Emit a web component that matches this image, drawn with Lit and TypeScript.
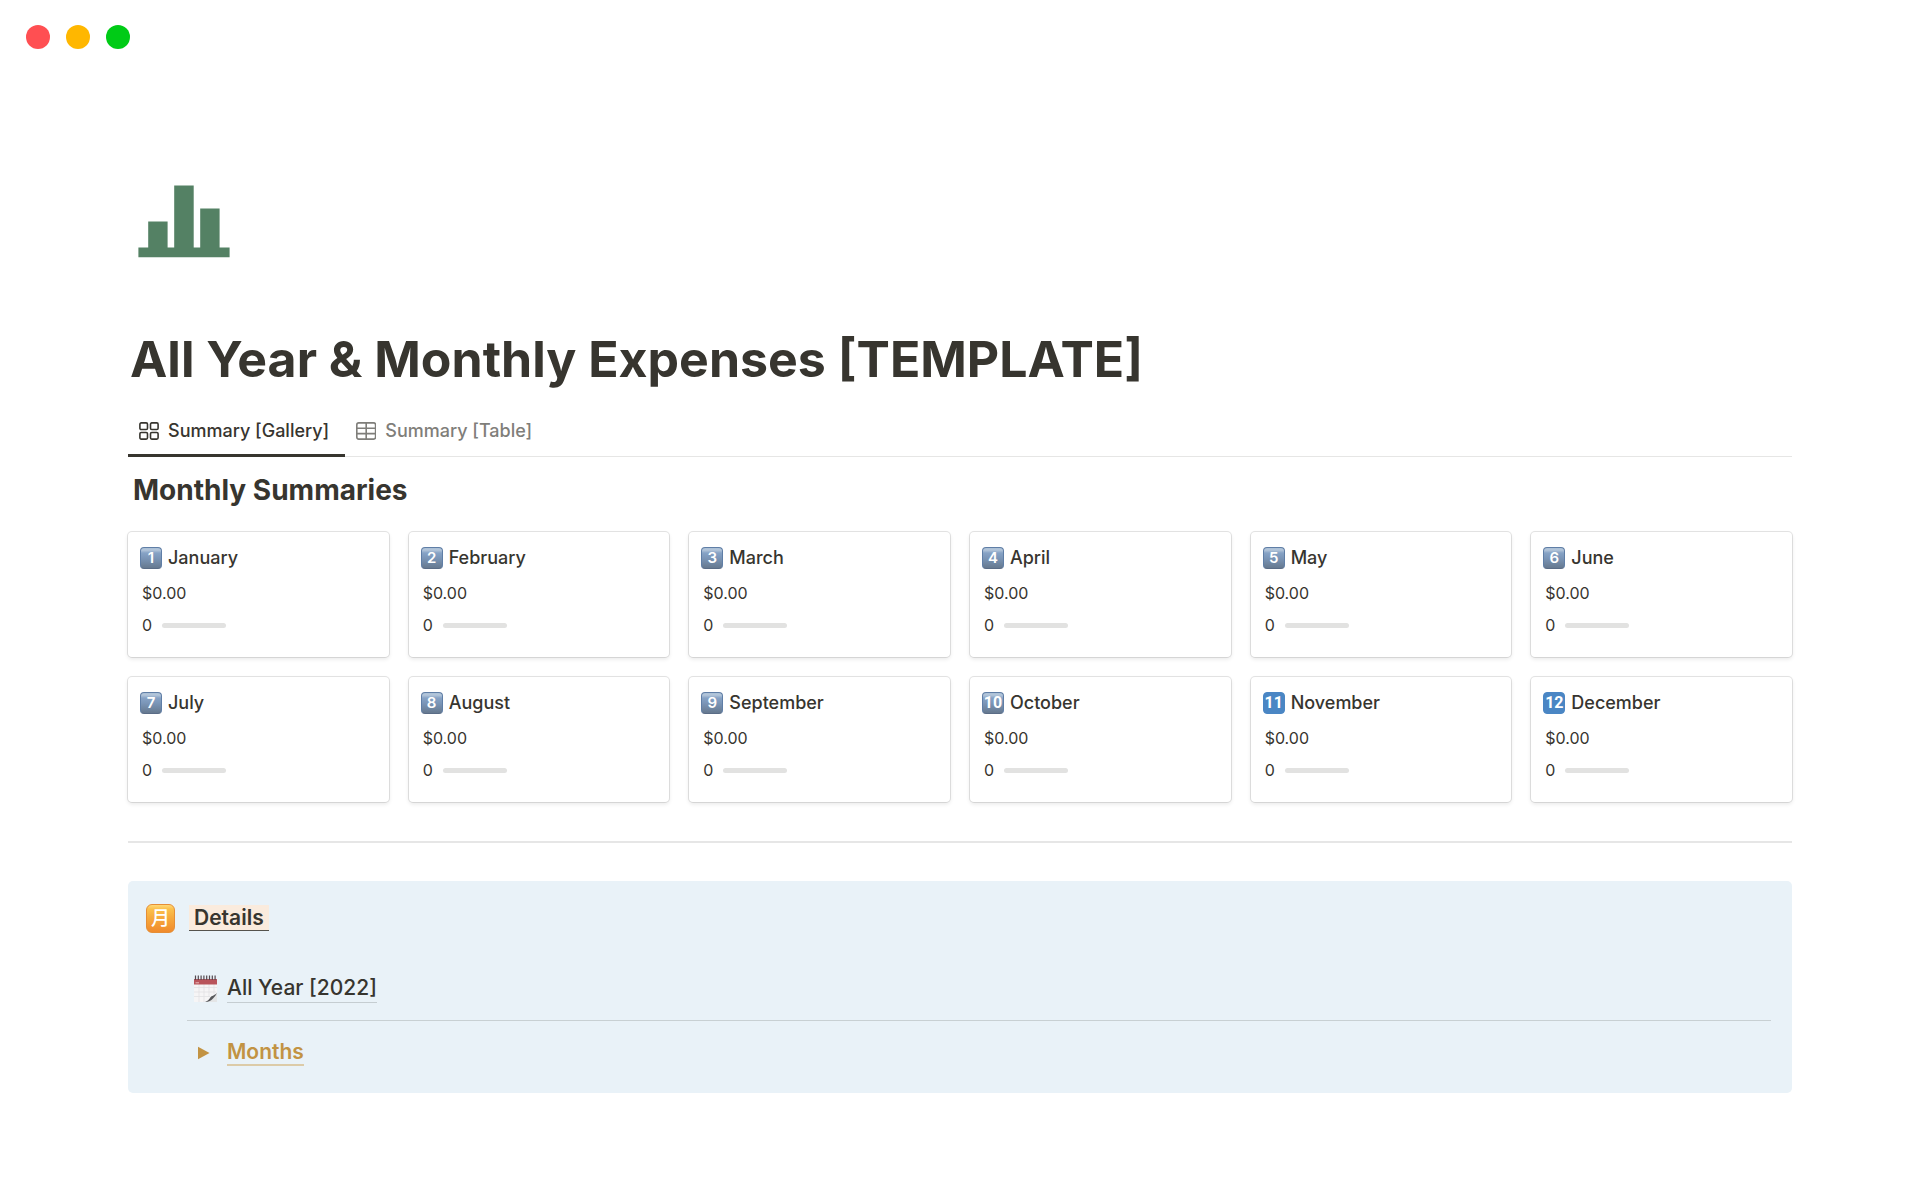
import { LitElement, html, css, svg, nothing } from "lit";
import { customElement, property, state } from "lit/decorators.js";
import { classMap } from "lit/directives/class-map.js";

interface Month {
  name: string;
  number: number;
  total: string;
  progress: number;
}

const MONTHS: Month[] = [
  "January", "February", "March", "April", "May", "June",
  "July", "August", "September", "October", "November", "December",
].map((name, i) => ({ name, number: i + 1, total: "$0.00", progress: 0 }));

const galleryIcon = svg`
  <svg class="icon" width="20" height="18" viewBox="0 0 20 18" fill="none" stroke="currentColor" stroke-width="1.6" aria-hidden="true">
    <rect x="0.9" y="0.9" width="7.6" height="6.6" rx="1.3" />
    <rect x="11.5" y="0.9" width="7.6" height="6.6" rx="1.3" />
    <rect x="0.9" y="10.5" width="7.6" height="6.6" rx="1.3" />
    <rect x="11.5" y="10.5" width="7.6" height="6.6" rx="1.3" />
  </svg>`;

const tableIcon = svg`
  <svg class="icon" width="20" height="18" viewBox="0 0 20 18" fill="none" stroke="currentColor" stroke-width="1.6" aria-hidden="true">
    <rect x="0.8" y="0.9" width="18.8" height="16.2" rx="2" />
    <path d="M1 6.2H19.4M1 11.6H19.4M10.2 1V17" />
  </svg>`;

@customElement("month-card")
export class MonthCard extends LitElement {
  @property({ attribute: false }) month!: Month;

  static styles = css`
    :host {
      display: block;
    }
    .card {
      display: flex;
      flex-direction: column;
      box-sizing: border-box;
      height: 100%;
      padding: 12px 12px 21px;
      border-radius: 4px;
      background: #fff;
      box-shadow: 0 0 0 1px rgba(15, 15, 15, 0.11), 0 2px 4px rgba(15, 15, 15, 0.1);
      color: #37352f;
      text-decoration: none;
      font-size: 16px;
      line-height: 20px;
    }
    .head {
      display: flex;
      align-items: center;
      gap: 6px;
      margin-bottom: 10px;
      font-size: 18px;
      line-height: 28px;
      font-weight: 500;
    }
    .badge {
      display: flex;
      align-items: center;
      justify-content: center;
      box-sizing: border-box;
      width: 22px;
      height: 22px;
      border: 1px solid #5f7ea6;
      border-bottom-color: #5a6c86;
      border-radius: 4px;
      background: linear-gradient(#a9bfd6 0, #b4c6da 2px, #86a2c5 5px, #7b96b8 50%, #66798f 100%);
      color: #fff;
      font-size: 15px;
      line-height: 20px;
      font-weight: 600;
    }
    .badge.two-digit {
      font-family: "Roboto", sans-serif;
      font-size: 16px;
      font-weight: 700;
    }
    .badge.flat {
      border-color: #4a86c4;
      background: #4a86c4;
    }
    .row {
      display: flex;
      align-items: center;
      padding-left: 2px;
      gap: 10px;
      min-height: 22px;
    }
    .row + .row {
      margin-top: 10px;
    }
    .track {
      width: 64px;
      height: 5px;
      border-radius: 3px;
      background: #e2e2e1;
      overflow: hidden;
    }
    .fill {
      height: 100%;
      background: #548164;
    }
  `;

  render() {
    const m = this.month;
    return html`
      <a class="card" href="#${m.name.toLowerCase()}">
        <div class="head">
          <span class=${classMap({ badge: true, "two-digit": m.number > 9, flat: m.number > 10 })}>${m.number}</span>
          <span>${m.name}</span>
        </div>
        <div class="row">${m.total}</div>
        <div class="row">
          <span>${m.progress}</span>
          <div class="track"><div class="fill" style="width:${m.progress}%"></div></div>
        </div>
      </a>
    `;
  }
}

@customElement("app-root")
export class AppRoot extends LitElement {
  @state() private view: "gallery" | "table" = "gallery";
  @state() private open = false;

  static styles = css`
    :host {
      display: block;
      min-height: 100vh;
      background: #fff;
      color: #37352f;
      font-family: "Inter", "Noto Sans CJK JP", sans-serif;
    }
    button {
      padding: 0;
      border: 0;
      background: none;
      color: inherit;
      font: inherit;
      cursor: pointer;
    }
    .window-bar {
      display: flex;
      gap: 16px;
      padding: 25px 26px;
    }
    .dot {
      width: 24px;
      height: 24px;
      border-radius: 50%;
    }
    .close { background: #ff4f52; }
    .minimize { background: #ffb700; }
    .expand { background: #00cb16; }
    .page {
      padding: 111px 128px 64px;
    }
    .page-icon {
      display: block;
      margin-left: 10px;
    }
    .title {
      margin: 69px 0 0;
      padding-left: 2px;
      font-size: 50px;
      line-height: 64px;
      font-weight: 700;
    }
    .tabs {
      display: flex;
      margin-top: 17px;
      border-bottom: 1px solid #e6e6e5;
    }
    .tab {
      display: flex;
      align-items: center;
      gap: 9px;
      margin-bottom: -1px;
      padding: 0 16px 0 11px;
      border-bottom: 3px solid transparent;
      color: #7f7e7a;
      font-size: 18px;
      line-height: 46px;
      font-weight: 500;
    }
    .tab.active {
      border-bottom-color: #37352f;
      color: #37352f;
    }
    .section-title {
      margin: 13px 0 0;
      padding-left: 5px;
      font-size: 28px;
      line-height: 40px;
      font-weight: 700;
    }
    .gallery {
      display: grid;
      grid-template-columns: repeat(6, minmax(0, 1fr));
      gap: 20px;
      margin-top: 22px;
    }
    .rule {
      height: 2px;
      margin: 39px 0 38px;
      border: 0;
      background: #e6e6e6;
    }
    .callout {
      display: flex;
      gap: 12px;
      padding: 20px 21px 27px 18px;
      border-radius: 5px;
      background: #e9f2f8;
      font-size: 21px;
      line-height: 32px;
    }
    .callout-icon {
      display: flex;
      align-items: center;
      justify-content: center;
      flex: none;
      box-sizing: border-box;
      width: 29px;
      height: 29px;
      margin-top: 3px;
      padding-bottom: 3px;
      border: 1px solid #e58e36;
      border-radius: 6px;
      background: linear-gradient(#ffd978 0, #fbc04c 4px, #f6a83c 50%, #f08a2c 100%);
      color: #fff;
      font-family: "Noto Sans CJK JP", sans-serif;
      font-size: 19px;
      line-height: 24px;
      font-weight: 500;
    }
    .callout-body {
      flex: 1;
      min-width: 0;
    }
    .callout-title {
      margin: 0;
      padding-left: 2px;
      font-size: 21px;
      line-height: 34px;
      font-weight: 600;
    }
    .mark {
      display: inline-block;
      padding: 0 5px;
      border-bottom: 1px solid #55534d;
      background: #faebdd;
      line-height: 25px;
    }
    .entry {
      display: flex;
      align-items: center;
      padding-left: 6px;
      gap: 9px;
      font-weight: 500;
    }
    .year {
      margin-top: 39px;
      color: inherit;
      text-decoration: none;
    }
    .year .label {
      border-bottom: 1px solid #c5cdd1;
      line-height: 28px;
    }
    .thin {
      height: 1px;
      margin: 17px 0 19px;
      border: 0;
      background: #c8d0d3;
    }
    .months {
      color: #c29343;
      font-weight: 600;
    }
    .months .label {
      border-bottom: 2px solid #dccba8;
      line-height: 24px;
    }
    .entry-icon {
      flex: none;
      width: 25px;
    }
  `;

  private tab(id: "gallery" | "table", label: string, icon: unknown) {
    const active = this.view === id;
    return html`
      <button
        class=${classMap({ tab: true, active })}
        role="tab"
        aria-selected=${active ? "true" : "false"}
        @click=${() => (this.view = id)}
      >${icon}<span>${label}</span></button>
    `;
  }

  render() {
    return html`
      <header class="window-bar">
        <button class="dot close" aria-label="Close"></button>
        <button class="dot minimize" aria-label="Minimize"></button>
        <button class="dot expand" aria-label="Expand"></button>
      </header>
      <main class="page">
        <svg class="page-icon" width="92" height="73" viewBox="0 0 92 73" fill="#548164" aria-hidden="true">
          <path d="M0.4 62.4H10.2V36.4H29.6V62.4H36.2V0.6H55.7V62.4H62.2V23.4H81.6V62.4H91.6V72.2H0.4Z" />
        </svg>
        <h1 class="title">All Year &amp; Monthly Expenses [TEMPLATE]</h1>
        <div class="tabs" role="tablist">
          ${this.tab("gallery", "Summary [Gallery]", galleryIcon)}
          ${this.tab("table", "Summary [Table]", tableIcon)}
        </div>
        <h2 class="section-title">Monthly Summaries</h2>
        <section class="gallery">
          ${MONTHS.map((m) => html`<month-card .month=${m}></month-card>`)}
        </section>
        <hr class="rule" />
        <section class="callout">
          <span class="callout-icon">月</span>
          <div class="callout-body">
            <h3 class="callout-title"><span class="mark">Details</span></h3>
            <a class="entry year" href="#all-year">
              <svg class="entry-icon" width="25" height="28" viewBox="0 0 25 28" aria-hidden="true">
                <path d="M1 4H24V19L13 27H1Z" fill="#f6f5f6" />
                <path d="M24 18V27H12C17 26 18 21 24 18Z" fill="#e4e5e6" />
                <path d="M1 12.5H24M1 17H23M1 21.5H17M6 9V27M11 9V27M16 9V22M21 9V19" stroke="#e0e0e3" stroke-width="0.7" />
                <path d="M1 4H24V9.5H1Z" fill="#b9545b" />
                <path d="M2.5 7.8H6" stroke="#e9b9bb" stroke-width="1" />
                <path d="M24 17.5C22 21 18 20.5 17 23C16 25 14 26 12 27C16 27 18 25.5 20 23.5C22 21.5 23 20 24 17.5Z" fill="#57585b" />
                <path d="M2.5 0.5V5M5.3 0.5V5M8.1 0.5V5M10.9 0.5V5M13.7 0.5V5M16.5 0.5V5M19.3 0.5V5M22.1 0.5V5" stroke="#55494f" stroke-width="1.2" />
              </svg>
              <span class="label">All Year [2022]</span>
            </a>
            <hr class="thin" />
            <button class="entry months" aria-expanded=${this.open ? "true" : "false"} @click=${() => (this.open = !this.open)}>
              <svg class="entry-icon" width="25" height="14" viewBox="0 0 25 14" aria-hidden="true">
                <path d=${this.open ? "M4 2H17L10.5 13Z" : "M5 0.8L16.5 7L5 13.2Z"} fill="#c29343" />
              </svg>
              <span class="label">Months</span>
            </button>
            ${this.open ? html`<div>${MONTHS.map((m) => html`<div>${m.name}</div>`)}</div>` : nothing}
          </div>
        </section>
      </main>
    `;
  }
}
